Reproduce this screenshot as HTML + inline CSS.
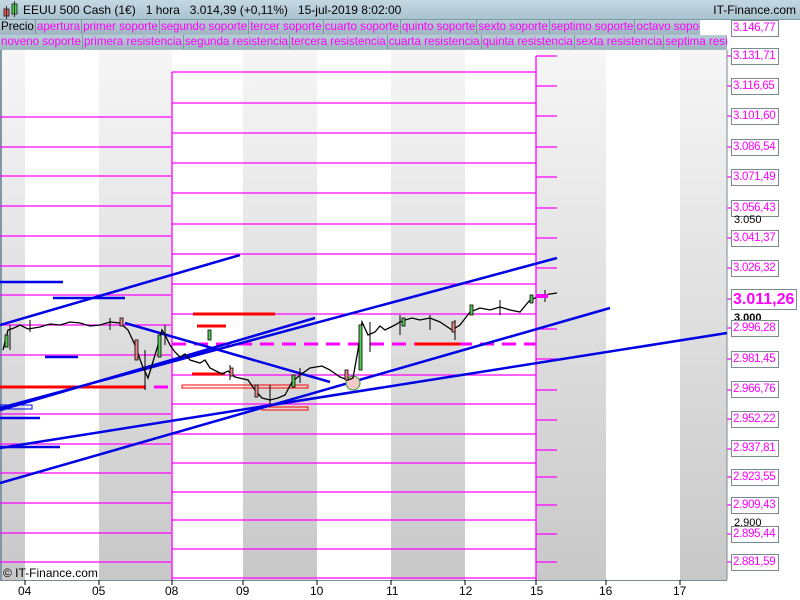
<!DOCTYPE html>
<html><head><meta charset="utf-8"><style>
*{margin:0;padding:0;box-sizing:border-box}
body{width:800px;height:600px;overflow:hidden;background:#fff;font-family:"Liberation Sans",sans-serif;position:relative}
#hdr{position:absolute;left:0;top:0;width:800px;height:20px;background:linear-gradient(#c4d8e2,#a9c3d0);border-bottom:1px solid #7f98a6;font-size:12px;line-height:20px}
.row{position:absolute;left:0;width:727px;height:15px;background:#a7bcc7;font-size:11.6px;line-height:14px;white-space:nowrap;overflow:hidden}
.row span{display:inline-block;color:#ff00ff;padding:0 1px;border-right:1px solid #7d939f;background:linear-gradient(#b9cdd7,#9fb5c1)}
.lab{position:absolute;left:731px;height:17px;width:48px;border:1px solid #7a8a93;background:#fff;color:#ff00ff;font-size:11.5px;letter-spacing:-0.3px;line-height:15px;padding-left:1px;white-space:nowrap;overflow:hidden}
.blk{position:absolute;left:734px;font-size:11px;color:#000}
.dl{position:absolute;top:584px;font-size:12px;color:#000}
</style></head><body>
<svg width="800" height="600" style="position:absolute;left:0;top:0">
<defs><linearGradient id="g" x1="0" y1="0" x2="0" y2="1"><stop offset="0" stop-color="#f6f6f6"/><stop offset="1" stop-color="#c8c8c8"/></linearGradient></defs>
<g fill="url(#g)">
<rect x="0" y="50" width="25" height="530"/><rect x="99" y="50" width="73" height="530"/><rect x="243" y="50" width="74" height="530"/><rect x="391" y="50" width="74" height="530"/><rect x="536" y="50" width="70" height="530"/><rect x="680" y="50" width="47" height="530"/>
</g>
<line x1="1" y1="50" x2="1" y2="580" stroke="#7f98a6" stroke-width="2"/>
<g stroke="#ff00ff" stroke-width="1.3" fill="none">
<path d="M0 117H171M0 147H171M0 176H171M0 206H171M0 236H171M0 266H171M0 295H171M0 325H171M0 355H171M0 414H171M0 444H171M0 473H171M0 503H171M0 533H171M0 562H171"/>
<path d="M172 72H536M172 103H536M172 133H536M172 163H536M172 193H536M172 224H536M172 254H536M172 284H536M172 314H536M172 375H536M172 404H536M172 434H536M172 463H536M172 492H536M172 520H536M172 549H536M172 578H536"/>
<path d="M536 56H557M536 86H557M536 116H557M536 147H557M536 177H557M536 208H557M536 238H557M536 268H557M536 329H557M536 359H557M536 390H557M536 420H557M536 450H557M536 477H557M536 505H557M536 534H557M536 562H557"/>
<path d="M172 72V580M536 56V580"/>
<path d="M727 28h4M727 56h4M727 86h4M727 116h4M727 147h4M727 177h4M727 208h4M727 238h4M727 268h4M727 299h4M727 328h4M727 359h4M727 390h4M727 419h4M727 449h4M727 477h4M727 505h4M727 534h4M727 562h4"/>
</g>
<line x1="727" y1="50" x2="727" y2="580" stroke="#7a8a93"/>
<g stroke="#ff00ff" stroke-width="3" stroke-dasharray="14 8">
<path d="M0 387H172M172 344H536"/>
</g>
<path d="M0 387H145" stroke="#f00" stroke-width="3"/>
<g stroke="#f00" stroke-width="3"><path d="M193 314H275M197 326H226M192 374H225M415 344H460"/></g>
<g stroke="#f00" fill="none"><rect x="182" y="385" width="126" height="3"/><rect x="262" y="407" width="46" height="3"/></g>
<g stroke="#0000e6" stroke-width="2.5">
<path d="M0 325L240 255M0 408L557 258M0 410L315 318M125 323L330 382M0 483L610 308M0 448L727 333"/>
<path d="M0 282H63M53 298H125M45 357H78M0 418H40M0 447H60"/>
</g>
<rect x="0" y="405" width="32" height="4" fill="none" stroke="#0000e6"/>
<circle cx="353" cy="383" r="7" fill="#f4c8c8" stroke="#2a9a2a"/>
<polyline fill="none" stroke="#000" stroke-width="1.3" points="3,350 8,330 14,328 20,325 28,329 40,327 50,324 60,325 70,322 80,323 90,326 100,325 110,322 120,323 128,330 135,345 142,365 148,378 152,365 158,345 162,330 166,337 170,345 175,352 180,357 185,354 190,360 200,363 205,360 210,368 222,374 228,371 235,377 248,380 255,390 262,398 270,400 278,398 285,395 292,382 300,375 310,368 322,366 330,370 340,377 348,380 353,378 358,350 362,322 368,335 375,332 380,326 385,330 395,325 400,322 405,320 412,318 420,320 430,318 440,322 446,326 452,330 460,325 470,312 480,308 490,310 500,307 510,310 520,312 530,300 540,296 550,294 557,293"/>
<g stroke="#000" stroke-width="1"><path d="M10 325v25M30 320v12M110 318v12M145 350v40M165 325v20M230 365v15M270 385v20M300 368v15M370 322v30M400 315v20M430 315v15M455 320v20M500 300v15M545 290v12"/></g>
<g fill="#5c5" stroke="#000" stroke-width=".8"><rect x="5" y="335" width="3" height="12"/><rect x="158" y="335" width="3" height="22"/><rect x="292" y="375" width="3" height="12"/><rect x="359" y="325" width="3" height="45"/><rect x="470" y="305" width="3" height="10"/><rect x="530" y="295" width="3" height="8"/><rect x="208" y="330" width="3" height="10"/><rect x="402" y="318" width="3" height="8"/></g>
<g fill="#e88" stroke="#000" stroke-width=".8"><rect x="135" y="340" width="3" height="20"/><rect x="255" y="385" width="3" height="12"/><rect x="345" y="370" width="3" height="10"/><rect x="452" y="322" width="3" height="10"/><rect x="120" y="318" width="3" height="8"/><rect x="230" y="368" width="3" height="8"/></g>
<path d="M536 296H548" stroke="#ff00ff" stroke-width="4"/>
</svg>
<div id="hdr"><svg width="16" height="18" style="position:absolute;left:3px;top:1px"><rect x="1" y="8" width="5" height="7" fill="#e55" stroke="#333"/><line x1="3.5" y1="5" x2="3.5" y2="18" stroke="#333"/><rect x="9" y="3" width="5" height="10" fill="#4d4" stroke="#333"/><line x1="11.5" y1="0" x2="11.5" y2="16" stroke="#333"/></svg><span style="position:absolute;left:23px">EEUU 500 Cash (1€)&nbsp;&nbsp;&nbsp;1 hora&nbsp;&nbsp;&nbsp;3.014,39 (+0,11%)&nbsp;&nbsp;&nbsp;15-jul-2019 8:02:00</span><span style="position:absolute;right:4px">IT-Finance.com</span></div>
<div class="row" style="top:20px;width:700px"><span style="color:#000">Precio</span><span>apertura</span><span>primer soporte</span><span>segundo soporte</span><span>tercer soporte</span><span>cuarto soporte</span><span>quinto soporte</span><span>sexto soporte</span><span>septimo soporte</span><span>octavo soporte</span></div>
<div class="row" style="top:35px"><span>noveno soporte</span><span>primera resistencia</span><span>segunda resistencia</span><span>tercera resistencia</span><span>cuarta resistencia</span><span>quinta resistencia</span><span>sexta resistencia</span><span>septima resistencia</span></div>
<div style="position:absolute;left:727px;top:20px;width:73px;height:30px;background:#fff"></div>
<div class="lab" style="top:20px">3.146,77</div>
<div class="lab" style="top:48px">3.131,71</div>
<div class="lab" style="top:78px">3.116,65</div>
<div class="lab" style="top:108px">3.101,60</div>
<div class="lab" style="top:139px">3.086,54</div>
<div class="lab" style="top:169px">3.071,49</div>
<div class="lab" style="top:200px">3.056,43</div>
<div class="blk" style="top:214px">3.050</div>
<div class="lab" style="top:230px">3.041,37</div>
<div class="lab" style="top:260px">3.026,32</div>
<div class="blk" style="top:312px;font-weight:bold">3.000</div>
<div class="lab" style="top:289px;height:21px;width:66px;font-size:16px;letter-spacing:0;font-weight:bold;line-height:19px">3.011,26</div>
<div class="lab" style="top:320px">2.996,28</div>
<div class="lab" style="top:351px">2.981,45</div>
<div class="lab" style="top:381px">2.966,76</div>
<div class="blk" style="top:414px">2.950</div>
<div class="lab" style="top:411px">2.952,22</div>
<div class="lab" style="top:440px">2.937,81</div>
<div class="lab" style="top:469px">2.923,55</div>
<div class="lab" style="top:497px">2.909,43</div>
<div class="blk" style="top:517px">2.900</div>
<div class="lab" style="top:526px">2.895,44</div>
<div class="lab" style="top:554px">2.881,59</div>
<div style="position:absolute;left:3px;top:566px;font-size:12px">© IT-Finance.com</div>
<div style="position:absolute;left:0;top:580px;width:727px;height:20px;border-top:1px solid #7a8a93;background:#fff"></div>
<svg width="727" height="6" style="position:absolute;left:0;top:580px"><path d="M25 0v5M99 0v5M172 0v5M243 0v5M317 0v5M391 0v5M465 0v5M536 0v5M606 0v5M680 0v5" stroke="#000"/></svg>
<div class="dl" style="left:18px">04</div><div class="dl" style="left:92px">05</div><div class="dl" style="left:165px">08</div><div class="dl" style="left:236px">09</div><div class="dl" style="left:310px">10</div><div class="dl" style="left:386px">11</div><div class="dl" style="left:459px">12</div><div class="dl" style="left:530px">15</div><div class="dl" style="left:599px">16</div><div class="dl" style="left:673px">17</div>
</body></html>
